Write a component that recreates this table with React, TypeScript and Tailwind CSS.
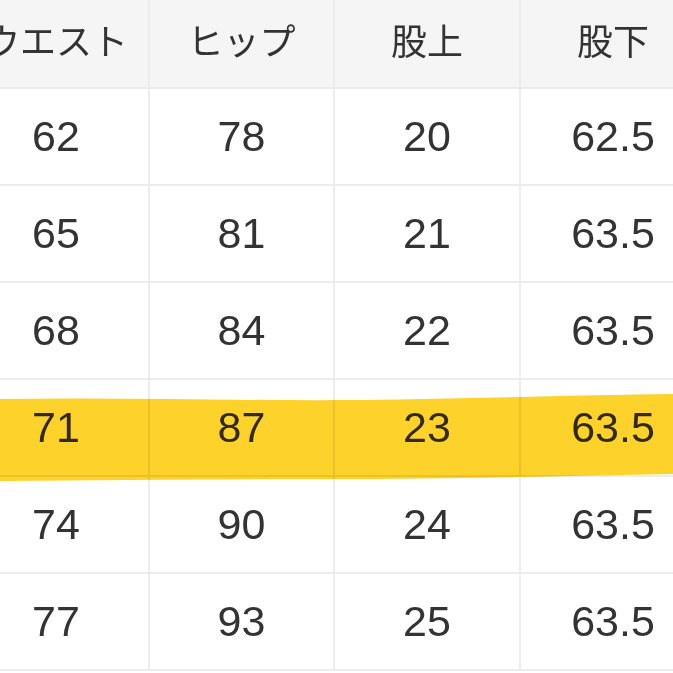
const headers = ["ウエスト", "ヒップ", "股上", "股下"];

const rows = [
  ["62", "78", "20", "62.5"],
  ["65", "81", "21", "63.5"],
  ["68", "84", "22", "63.5"],
  ["71", "87", "23", "63.5"],
  ["74", "90", "24", "63.5"],
  ["77", "93", "25", "63.5"],
];

function Highlight() {
  // marker stroke over the 4th row
  return (
    <svg
      className="pointer-events-none absolute inset-0 mix-blend-multiply"
      width="673"
      height="673"
      viewBox="0 0 673 673"
    >
      <path
        d="M0 399 C120 397 240 401 360 400 C470 399 580 395 673 394 L673 474 C560 476 450 479 330 479 C210 479 110 480 0 481 Z"
        fill="#fdd22b"
      />
    </svg>
  );
}

export default function App() {
  return (
    <div className="relative h-[673px] w-[673px] overflow-hidden bg-white text-[#333333]">
      <div className="ml-[-36px] grid w-[743px] grid-cols-[186px_185px_186px_186px]">
        {headers.map((label) => (
          <div
            key={label}
            className="flex h-[89px] items-center justify-center border-b-2 border-r-2 border-[#ebebeb] bg-[#f5f5f5] pb-[10px] text-[36px] font-['Noto_Sans_CJK_JP',sans-serif] leading-none"
          >
            {label}
          </div>
        ))}
        {rows.map((row, i) =>
          row.map((value, j) => (
            <div
              key={`${i}-${j}`}
              className="flex h-[97px] items-center justify-center border-b-2 border-r-2 border-[#ececec] text-[43px] font-['Liberation_Sans',Arial,sans-serif] leading-none"
            >
              {value}
            </div>
          )),
        )}
      </div>
      <Highlight />
    </div>
  );
}
